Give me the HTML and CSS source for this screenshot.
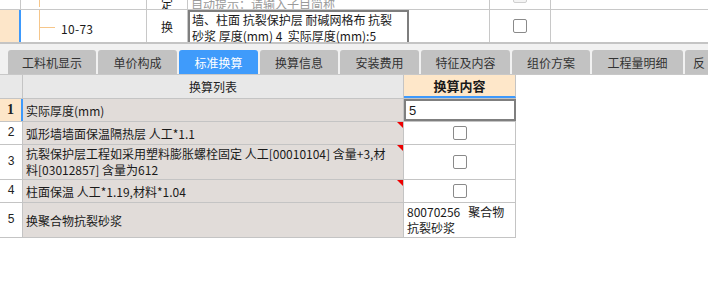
FILE: index.html
```html
<!DOCTYPE html>
<html lang="zh">
<head>
<meta charset="utf-8">
<link rel="stylesheet" href="styles.css">
</head>
<body>
<div class="grid-top">
  <div class="trow partial">
    <div class="c0"></div>
    <div class="c1 tree"></div>
    <div class="c2 center">定</div>
    <div class="c3 hint">自动提示：请输入子目简称</div>
    <div class="c4"></div>
    <div class="c5 center"><span class="chk dis"></span></div>
    <div class="c6"></div>
  </div>
  <div class="trow main">
    <div class="c0 sel"></div>
    <div class="c1 tree"><span class="branch"></span><span class="code">10-73</span></div>
    <div class="c2 center">换</div>
    <div class="c3 edit">墙、柱面 抗裂保护层 耐碱网格布 抗裂<br>砂浆 厚度(mm) 4&nbsp; 实际厚度(mm):5</div>
    <div class="c4"></div>
    <div class="c5 center"><span class="chk"></span></div>
    <div class="c6"></div>
  </div>
</div>
<div class="tabbar">
  <div class="tab w88">工料机显示</div>
  <div class="tab w78">单价构成</div>
  <div class="tab w78 active">标准换算</div>
  <div class="tab w77">换算信息</div>
  <div class="tab w78">安装费用</div>
  <div class="tab w89">特征及内容</div>
  <div class="tab w77">组价方案</div>
  <div class="tab w91">工程量明细</div>
  <div class="tab w40">反</div>
</div>
<div class="table">
  <div class="hrow">
    <div class="num"></div>
    <div class="col1 hcenter">换算列表</div>
    <div class="col2 hsel">换算内容</div>
  </div>
  <div class="row h22">
    <div class="num cur">1</div>
    <div class="col1">实际厚度(mm)</div>
    <div class="col2 input">5</div>
  </div>
  <div class="row h23">
    <div class="num">2</div>
    <div class="col1 mark">弧形墙墙面保温隔热层 人工*1.1</div>
    <div class="col2 center"><span class="chk"></span></div>
  </div>
  <div class="row h35">
    <div class="num">3</div>
    <div class="col1 mark multi">抗裂保护层工程如采用塑料膨胀螺栓固定 人工[00010104] 含量+3,材<br>料[03012857] 含量为612</div>
    <div class="col2 center"><span class="chk"></span></div>
  </div>
  <div class="row h23">
    <div class="num">4</div>
    <div class="col1 mark">柱面保温 人工*1.19,材料*1.04</div>
    <div class="col2 center"><span class="chk"></span></div>
  </div>
  <div class="row h35">
    <div class="num">5</div>
    <div class="col1">换聚合物抗裂砂浆</div>
    <div class="col2 top">80070256&nbsp;&nbsp; 聚合物<br>抗裂砂浆</div>
  </div>
</div>
</body>
</html>
```

FILE: styles.css
```css
* { box-sizing: border-box; }
html, body { margin: 0; padding: 0; background: #fff; }
body {
  font-family: "Noto Sans CJK SC", "Liberation Sans", sans-serif;
  font-size: 12px;
  color: #1a1a1a;
  width: 708px;
  height: 299px;
  overflow: hidden;
}

/* top grid */
.grid-top { border-bottom: 2px solid #c4c4c4; }
.trow { display: flex; }
.trow.partial { height: 10px; border-bottom: 1px solid #c8c8c8; overflow: hidden; align-items: flex-end; }
.trow.main { height: 32px; }
.trow > div { height: 100%; border-right: 1px solid #c8c8c8; display: flex; align-items: center; }
.c0 { width: 21px; }
.c0.sel { background: #fde6c9; border-right: 2px solid #3d99fc !important; }
.c1 { width: 126px; }
.c2 { width: 41px; }
.c3 { width: 221px; }
.c4 { width: 81px; }
.c5 { width: 61px; }
.c6 { flex: 1; border-right: none !important; }
.center { justify-content: center; }
.partial > div { align-items: flex-end; line-height: 14px; }
.partial .c2, .partial .hint { margin-bottom: -2px; height: auto !important; border-right: none; }
.partial .c2 { border-right: 1px solid #c8c8c8; height: 12px !important; }
.hint { color: #9a9a9a; padding-left: 3px; }
.partial .chk { margin-bottom: 6px; }

.tree { position: relative; }
.tree::before {
  content: ""; position: absolute; left: 18px; top: 0; bottom: 2px;
  border-left: 1px solid #f6c68a;
}
.branch { width: 15px; margin-left: 19px; border-top: 1px solid #f6c68a; margin-top: 3px; }
.code { margin-left: 6px; margin-top: 4px; letter-spacing: 0.3px; }
.edit {
  border: 2px solid #7e7e7e !important;
  border-bottom: none !important;
  line-height: 16px;
  padding: 0 0 0 2px;
  align-items: flex-start !important;
  white-space: nowrap;
  font-size: 12px;
}

.chk {
  display: inline-block;
  width: 14px; height: 14px;
  border: 1px solid #8a8a8a;
  border-radius: 2px;
  background: #fff;
}
.chk.dis { border-color: #d0d0d0; background: #f4f4f4; }

/* tabs */
.tabbar {
  height: 31px;
  background: #f1f1f1;
  display: flex;
  align-items: flex-end;
  padding-left: 8px;
  gap: 2px;
  border-bottom: 1px solid #c8c8c8;
}
.tab {
  height: 24px;
  background: #c2c2c2;
  border-radius: 3px 3px 0 0;
  display: flex; align-items: center; justify-content: center;
  color: #333;
  font-size: 12px;
  flex: none;
}
.tab.active { background: #3f9bfb; color: #fff; }
.w88 { width: 88px; } .w78 { width: 79px; } .w77 { width: 78px; }
.w89 { width: 89px; } .w91 { width: 91px; } .w40 { width: 40px; justify-content: flex-start; padding-left: 8px; }

/* table */
.table { width: 516px; }
.hrow, .row { display: flex; border-bottom: 1px solid #c4c4c4; }
.hrow { height: 24px; background: #e8e8e8; }
.hrow > div { display: flex; align-items: center; }
.num { width: 23px; border-right: 1px solid #c4c4c4; display: flex; align-items: center; justify-content: center; font-family: "Liberation Mono", monospace; font-size: 12px; color: #222; }
.col1 { width: 381px; border-right: 1px solid #c4c4c4; }
.col2 { width: 112px; border-right: 1px solid #c4c4c4; }
.hcenter { justify-content: center; font-size: 12px; color: #222; }
.hsel { background: #fee7c9; justify-content: center; font-weight: bold; font-size: 13px; border-bottom: 2px solid #3d99fc; }
.h22 { height: 23px; }
.h23 { height: 23px; }
.h35 { height: 35px; }
.row .col1 { background: #e1dcd9; padding: 1px 0 0 3px; line-height: 16px; position: relative; display: flex; align-items: center; white-space: nowrap; }
.row .col2 { display: flex; align-items: center; padding-left: 3px; background: #fff; }
.col1.multi { align-items: flex-start; padding-top: 1px; line-height: 16px; }
.num.cur { background: #fde6c9; font-family: "Liberation Serif", serif; font-weight: bold; font-size: 14px; border-right: 2px solid #3d99fc; }
.col2.input { border: 2px solid #7f7f7f; font-family: "Liberation Sans", sans-serif; font-size: 13px; }
.col2.center { justify-content: center; padding-left: 0; }
.col2.top { align-items: flex-start; padding-top: 1px; line-height: 16px; white-space: nowrap; }
.mark::after {
  content: ""; position: absolute; right: 0; top: 0;
  border-style: solid; border-width: 0 6px 6px 0;
  border-color: transparent #ee0000 transparent transparent;
}
```
